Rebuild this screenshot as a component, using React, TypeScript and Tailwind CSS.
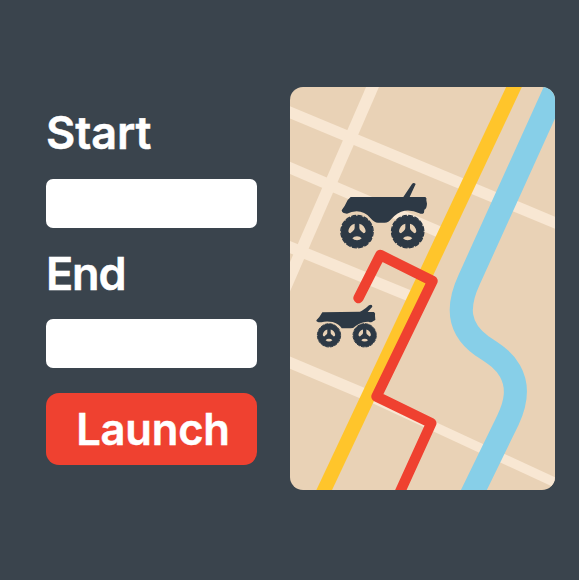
import React from "react";

function Wheel({ x, y, r }: { x: number; y: number; r: number }) {
  return (
    <g transform={`translate(${x} ${y}) scale(${r / 50})`}>
      <circle r="48" fill="#2d3945" />
      <circle r="48.5" fill="none" stroke="#2d3945" strokeWidth="4" strokeDasharray="15 4.05" />
      <g fill="#e9d2b6">
        <path d="M-7 -24 Q-24 -19 -26 -1 Q-25 5 -20 5 L-12 -2 Q-7 -6 -7 -11 Z" />
        <path d="M7 -24 Q24 -19 26 -1 Q25 5 20 5 L12 -2 Q7 -6 7 -11 Z" />
        <path d="M-14 20 Q-9 14 0 14 Q9 14 14 20 Q9 26 0 26 Q-9 26 -14 20 Z" />
      </g>
    </g>
  );
}

function RouteMap() {
  return (
    <svg viewBox="290 87 265 403" className="block h-full w-full" fill="none">
      <g stroke="#f8e7d3" strokeWidth="11.3">
        <path d="M280 108.1L570 229" />
        <path d="M280 163.5L440 232.3" />
        <path d="M280 243L416 298.4" />
        <path d="M280 358.3L368 395.5" />
        <path d="M366 395L570 489.5" strokeWidth="9.6" />
        <path d="M377 76.7L280 299.7" strokeWidth="11.8" />
      </g>
      <path d="M518.7 77L319.5 500" stroke="#ffc52b" strokeWidth="14.2" />
      <path
        d="M561 77L469 280C457 306 457 328 482 346C494 354 503 359 510 371C519 387 516 403 508 420L470 498"
        stroke="#87cfe8"
        strokeWidth="23.3"
      />
      <path
        d="M358.5 298L380.3 255L432.5 281L376.5 396.5L431.3 423.2L396.3 500"
        stroke="#ef4130"
        strokeWidth="10.4"
        strokeLinecap="round"
        strokeLinejoin="round"
      />
      <g transform="translate(325 170) scale(.33333)">
        <path
          fill="#2d3945"
          d="M77 81H235L261 42Q266 36 272 42L254 81H301Q306 84 304 91L306 101Q305 117 298 119L297 128Q292 134 283 130Q262 119 239 122Q217 126 199 147Q191 158 179 158H159Q148 158 136 144Q119 124 95 124Q79 125 66 131Q51 131 50 121Q60 108 68 90Z"
        />
        <Wheel x={96} y={185} r={50} />
        <Wheel x={248} y={185} r={50} />
      </g>
      <g transform="translate(305 290) scale(.33333)">
        <path
          fill="#2d3945"
          d="M52 67L165 65Q176 61 192 46Q202 41 202 50L188 66H207Q212 69 210 77L211 90L204 94Q200 99 190 95Q170 95 153 107Q146 115 136 115H110Q104 103 83 96Q61 93 50 97Q34 98 34 91L43 81Z"
        />
        <Wheel x={72} y={136} r={36} />
        <Wheel x={179} y={136} r={36} />
      </g>
    </svg>
  );
}

export default function App() {
  return (
    <main className="flex h-[580px] w-[579px] items-start overflow-hidden bg-[#3a444d] pl-[46px] pt-[87px] font-['Inter',sans-serif] font-semibold text-white">
      <form className="flex w-[211px] shrink-0 flex-col pt-[19px]" onSubmit={(e) => e.preventDefault()}>
        <label htmlFor="start" className="block h-[73px] pt-[1px] text-[45px] leading-[52px] tracking-[-0.1px] [-webkit-text-stroke:0.5px_white]">
          Start
        </label>
        <input id="start" className="block h-[49px] w-full rounded-[7px] bg-white px-3 text-2xl text-gray-800 outline-none" />
        <label htmlFor="end" className="block h-[91px] pt-[20px] text-[45px] leading-[52px] tracking-[-1.2px] [-webkit-text-stroke:0.5px_white]">
          End
        </label>
        <input id="end" className="block h-[49px] w-full rounded-[7px] bg-white px-3 text-2xl text-gray-800 outline-none" />
        <button type="submit" className="mt-[25px] block h-[72px] w-full rounded-[13px] bg-[#ef4130] pl-[3px] text-[43.5px] leading-[72px] tracking-[-0.2px] [-webkit-text-stroke:0.5px_white]">
          Launch
        </button>
      </form>
      <section className="ml-[33px] h-[403px] w-[265px] shrink-0 overflow-hidden rounded-[13px] bg-[#e9d2b6]">
        <RouteMap />
      </section>
    </main>
  );
}
